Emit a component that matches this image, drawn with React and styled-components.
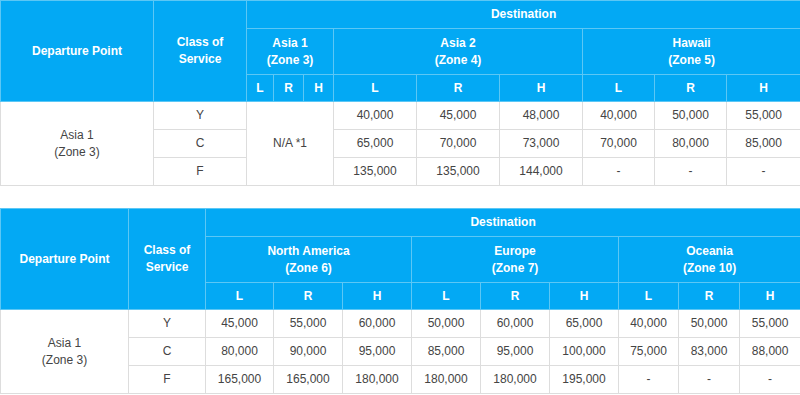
import React from 'react';
import styled, { createGlobalStyle } from 'styled-components';

const GlobalStyle = createGlobalStyle`
  body {
    margin: 0;
    background: #fff;
    font-family: "Liberation Sans", Arial, sans-serif;
  }
`;

const Page = styled.div`
  width: 800px;
  display: flex;
  flex-direction: column;
  gap: 22px;
`;

const Table = styled.table`
  width: 800px;
  border-collapse: collapse;
  table-layout: fixed;
  font-size: 12px;
  line-height: 17px;
`;

const Head = styled.th`
  background: #03a9f4;
  color: #fff;
  font-weight: bold;
  text-align: center;
  vertical-align: middle;
  padding: 0;
  border: 1px solid #5cc7f5;
  height: ${(p) => p.h || 26}px;
`;

const Cell = styled.td`
  color: #444;
  text-align: center;
  vertical-align: middle;
  padding: 0;
  border: 1px solid #dddddd;
  height: 27px;
`;

const zones1 = [
  { name: 'Asia 1', zone: 'Zone 3' },
  { name: 'Asia 2', zone: 'Zone 4' },
  { name: 'Hawaii', zone: 'Zone 5' },
];

const zones2 = [
  { name: 'North America', zone: 'Zone 6' },
  { name: 'Europe', zone: 'Zone 7' },
  { name: 'Oceania', zone: 'Zone 10' },
];

const rows1 = [
  { cls: 'Y', values: ['40,000', '45,000', '48,000', '40,000', '50,000', '55,000'] },
  { cls: 'C', values: ['65,000', '70,000', '73,000', '70,000', '80,000', '85,000'] },
  { cls: 'F', values: ['135,000', '135,000', '144,000', '-', '-', '-'] },
];

const rows2 = [
  { cls: 'Y', values: ['45,000', '55,000', '60,000', '50,000', '60,000', '65,000', '40,000', '50,000', '55,000'] },
  { cls: 'C', values: ['80,000', '90,000', '95,000', '85,000', '95,000', '100,000', '75,000', '83,000', '88,000'] },
  { cls: 'F', values: ['165,000', '165,000', '180,000', '180,000', '180,000', '195,000', '-', '-', '-'] },
];

const FareTable = ({ widths, zones, rows, naFirst }) => (
  <Table>
    <colgroup>
      {widths.map((w, i) => (
        <col key={i} style={{ width: w }} />
      ))}
    </colgroup>
    <thead>
      <tr>
        <Head rowSpan={3}>Departure Point</Head>
        <Head rowSpan={3}>
          Class of
          <br />
          Service
        </Head>
        <Head colSpan={9} h={27}>
          Destination
        </Head>
      </tr>
      <tr>
        {zones.map((z) => (
          <Head key={z.name} colSpan={3} h={45}>
            {z.name}
            <br />({z.zone})
          </Head>
        ))}
      </tr>
      <tr>
        {zones.map((z) =>
          ['L', 'R', 'H'].map((k) => <Head key={z.name + k}>{k}</Head>)
        )}
      </tr>
    </thead>
    <tbody>
      {rows.map((r, i) => (
        <tr key={r.cls}>
          {i === 0 && (
            <Cell rowSpan={3}>
              Asia 1
              <br />
              (Zone 3)
            </Cell>
          )}
          <Cell>{r.cls}</Cell>
          {naFirst && i === 0 && (
            <Cell colSpan={3} rowSpan={3}>
              N/A *1
            </Cell>
          )}
          {r.values.map((v, j) => (
            <Cell key={j}>{v}</Cell>
          ))}
        </tr>
      ))}
    </tbody>
  </Table>
);

const App = () => (
  <>
    <GlobalStyle />
    <Page>
      <FareTable
        widths={[153, 93, 27, 30, 30, 83, 83, 83, 72, 72, 74]}
        zones={zones1}
        rows={rows1}
        naFirst
      />
      <FareTable
        widths={[128, 77, 68, 69, 69, 69, 69, 69, 60, 61, 61]}
        zones={zones2}
        rows={rows2}
      />
    </Page>
  </>
);

export default App;
